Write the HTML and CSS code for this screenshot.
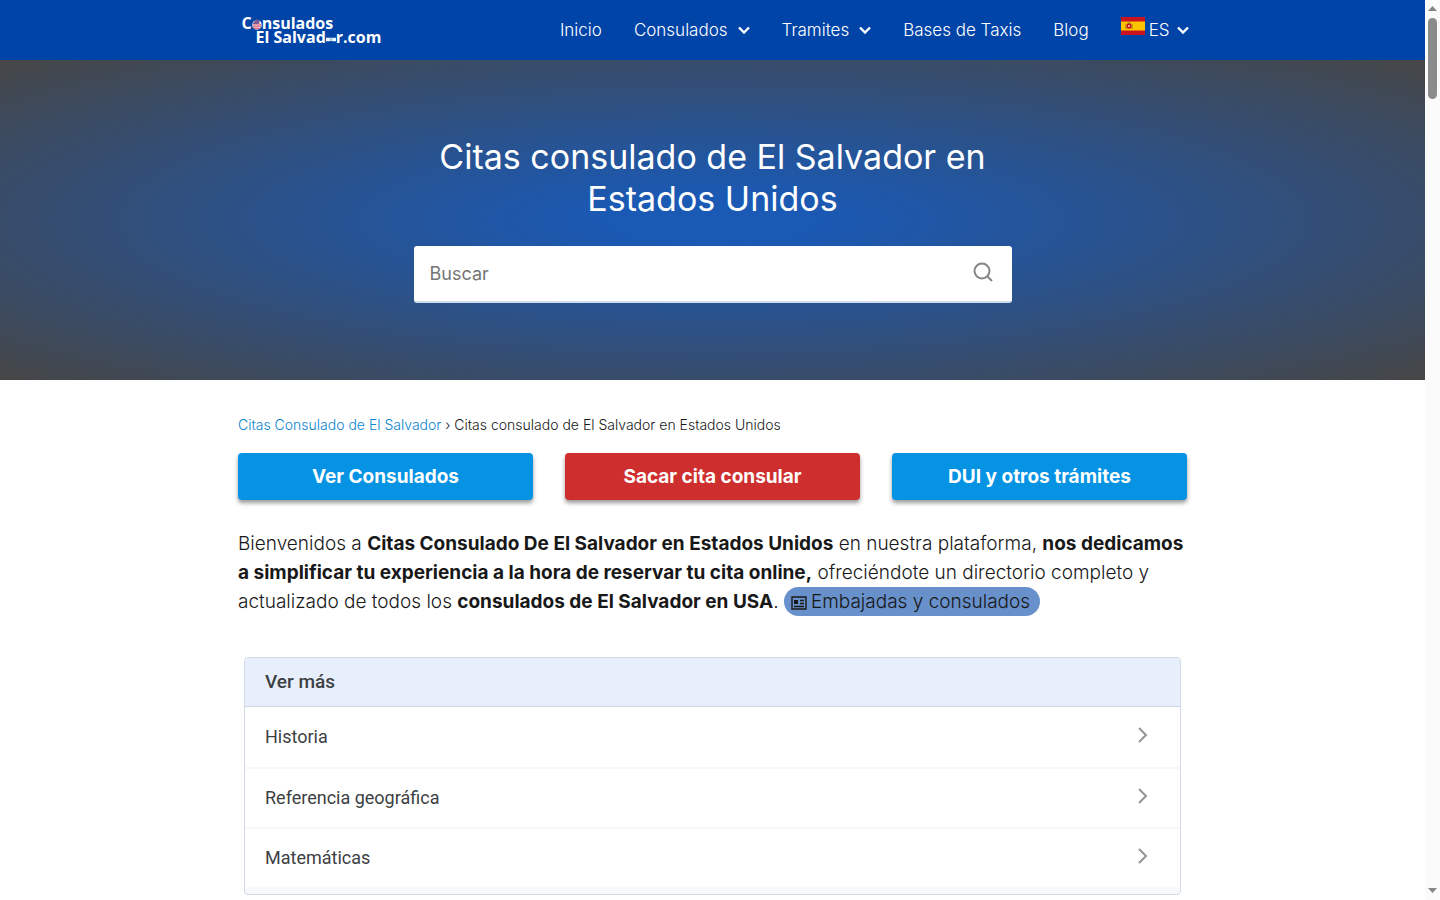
FILE: index.html
```html
<!DOCTYPE html>
<html lang="es">
<head>
<meta charset="utf-8">
<meta name="viewport" content="width=device-width, initial-scale=1">
<title>Citas consulado de El Salvador en Estados Unidos</title>
<link rel="stylesheet" href="styles.css">
</head>
<body>

<div class="page">
  <header class="site-header">
    <div class="header-inner">
      <a class="logo" href="#">
        <span class="logo-line">C<svg class="logo-globe" viewBox="0 0 11 12"><circle cx="5.5" cy="6.5" r="5.300" fill="#f6e6ea"/><path d="M1 6.500h9.500M1 8.500h9M2.500 10.500h6" stroke="#d5405a"/><path d="M1.500 4 5 0 8 2v3.500H1z" fill="#7b5a96"/></svg>nsulados</span>
        <span class="logo-line logo-second">El Salvad<svg class="logo-flag" viewBox="0 0 11 5"><path d="M0 .5h11v4H7L5.500 3.500 4 4.500H0z" fill="#eef8ff"/><path d="M4 2h3" stroke="#5aa0c8"/></svg>r.com</span>
      </a>
      <nav class="menu">
        <a href="#">Inicio</a>
        <a href="#">Consulados<svg class="arrow" viewBox="0 0 12 8"><path d="M1 1.500l5 5 5-5"/></svg></a>
        <a href="#">Tramites<svg class="arrow" viewBox="0 0 12 8"><path d="M1 1.500l5 5 5-5"/></svg></a>
        <a href="#">Bases de Taxis</a>
        <a href="#">Blog</a>
        <a class="lang" href="#"><svg class="flag" viewBox="0 0 24 18"><path fill="#c8141e" d="M0 0h24v18H0z"/><path fill="#ffc400" d="M0 4.500h24v9H0z"/><path fill="#c8141e" d="M5.500 7h5v3.500q-2.500 2.500-5 0z"/><path fill="#e8a090" d="M7 8h2v2H7z"/><path fill="#a06a20" d="M4.500 7.500h1V12h-1zM10.500 7.500h1V12h-1zM6.500 5.500h3V7h-3z"/></svg>ES<svg class="arrow" viewBox="0 0 12 8"><path d="M1 1.500l5 5 5-5"/></svg></a>
      </nav>
    </div>
  </header>

  <section class="hero">
    <h1>Citas consulado de El Salvador en Estados Unidos</h1>
    <form class="search">
      <input type="text" placeholder="Buscar" aria-label="Buscar">
      <button type="button" aria-label="Buscar"><svg viewBox="0 0 20 20"><circle cx="9" cy="9" r="7.500"/><path d="M14.500 14.500 19 19"/></svg></button>
    </form>
  </section>

  <main class="content">
    <div class="breadcrumb"><a href="#">Citas Consulado de El Salvador</a> › <span>Citas consulado de El Salvador en Estados Unidos</span></div>

    <div class="buttons">
      <a class="btn" href="#">Ver Consulados</a>
      <a class="btn btn-red" href="#">Sacar cita consular</a>
      <a class="btn" href="#">DUI y otros trámites</a>
    </div>

    <p class="intro">Bienvenidos a <strong>Citas Consulado De El Salvador en Estados Unidos</strong> en nuestra plataforma, <strong>nos dedicamos<br>a simplificar tu experiencia a la hora de reservar tu cita online,</strong> ofreciéndote un directorio completo y<br>actualizado de todos los <strong>consulados de El Salvador en USA</strong>. <a class="pill" href="#"><svg viewBox="0 0 16 14"><path d="M1 1h14v12H1z"/><path class="solid" d="M3 4h4v4H3z"/><path d="M9 4.500h4M9 7.500h4M3 10.500h10"/></svg>Embajadas y consulados</a></p>

    <section class="more">
      <h2>Ver más</h2>
      <ul>
        <li><a href="#">Historia<svg viewBox="0 0 10 16"><path d="M1 1l7 7-7 7"/></svg></a></li>
        <li><a href="#">Referencia geográfica<svg viewBox="0 0 10 16"><path d="M1 1l7 7-7 7"/></svg></a></li>
        <li><a href="#">Matemáticas<svg viewBox="0 0 10 16"><path d="M1 1l7 7-7 7"/></svg></a></li>
      </ul>
    </section>
  </main>
</div>

<div class="scrollbar">
  <svg viewBox="0 0 9 5"><path d="M0 5 4.500 0 9 5z"/></svg>
  <div class="thumb"></div>
  <svg class="down" viewBox="0 0 9 5"><path d="M0 0h9L4.500 5z"/></svg>
</div>

</body>
</html>
```
FILE: styles.css
```css
* {
  box-sizing: border-box;
}

body {
  margin: 0;
  display: flex;
  align-items: flex-start;
  font-family: Inter, "Open Sans", sans-serif;
  font-weight: 300;
  color: #181818;
  background: #fff;
}

a {
  color: inherit;
  text-decoration: none;
}

strong {
  font-weight: 700;
}

.page {
  flex: 1;
  min-width: 0;
}

/* header */
.site-header {
  background: #0044a8;
  color: #fff;
}

.header-inner {
  display: flex;
  align-items: center;
  justify-content: space-between;
  max-width: 952px;
  height: 60px;
  margin: 0 auto;
  padding-left: 5px;
}

.logo {
  display: flex;
  flex-direction: column;
  font-family: "Open Sans", sans-serif;
  font-size: 16px;
  font-weight: 700;
  line-height: 14px;
}

.logo-second {
  padding-left: 14px;
}

.logo-globe {
  width: 10px;
  height: 11px;
  vertical-align: -1px;
}

.logo-flag {
  width: 10px;
  height: 5px;
  vertical-align: 1px;
}

.menu {
  display: flex;
  gap: 32px;
  font-size: 17px;
  line-height: 24px;
}

.menu a {
  display: flex;
  align-items: center;
}

.arrow {
  width: 12px;
  height: 8px;
  margin-left: 10px;
  fill: none;
  stroke: #fff;
  stroke-width: 2.4;
}

.flag {
  width: 24px;
  height: 18px;
  margin: 0 4px 8px 0;
}

.lang .arrow {
  margin-left: 7px;
}

/* hero */
.hero {
  padding: 76px 16px 77px;
  background: radial-gradient(ellipse at center, #1a59b4 10%, #464646 100%);
}

.hero h1 {
  max-width: 598px;
  margin: 0 auto 26px;
  color: #fff;
  font-size: 34px;
  font-weight: 400;
  line-height: 42px;
  text-align: center;
}

.search {
  display: flex;
  align-items: center;
  max-width: 598px;
  height: 57px;
  margin: 0 auto;
  background: #fff;
  border-bottom: 2px solid #cfdcec;
  border-radius: 3px;
}

.search input {
  flex: 1;
  min-width: 0;
  height: 100%;
  padding: 0 16px;
  border: 0;
  background: none;
  font-family: inherit;
  font-size: 18px;
  outline: none;
}

.search input::placeholder {
  color: #757575;
}

.search button {
  padding: 0;
  margin: 0 19px 4px 0;
  border: 0;
  background: none;
}

.search svg {
  display: block;
  width: 20px;
  height: 20px;
  fill: none;
  stroke: #868686;
  stroke-width: 2;
}

/* content */
.content {
  max-width: 949px;
  margin: 0 auto;
  padding-top: 35px;
}

.breadcrumb {
  font-size: 14px;
  line-height: 20px;
}

.breadcrumb a {
  color: #0a84d0;
}

.buttons {
  display: grid;
  grid-template-columns: repeat(3, 1fr);
  gap: 32px;
  margin-top: 18px;
}

.btn {
  border-radius: 4px;
  background: #0693e3;
  box-shadow: 0 3px 4px rgba(0, 0, 0, .4);
  color: #fff;
  font-size: 19px;
  font-weight: 700;
  line-height: 47px;
  text-align: center;
}

.btn-red {
  background: #cf2e2e;
}

.intro {
  margin: 29px 0 41px;
  font-size: 19px;
  line-height: 29px;
}

.pill {
  display: inline-block;
  padding: 0 10px 0 7px;
  border-radius: 15px;
  background: #6890cb;
}

.pill svg {
  width: 16px;
  height: 14px;
  margin-right: 4px;
  vertical-align: -2px;
  fill: none;
  stroke: #181818;
  stroke-width: 1.4;
}

.pill .solid {
  fill: #181818;
  stroke: none;
}

/* list */
.more {
  margin: 0 6px;
  padding-bottom: 7px;
  border: 1px solid #d2d9e4;
  border-radius: 4px;
  background: #f8f9fb;
  color: #3c4043;
  font-family: Roboto, sans-serif;
  font-size: 18px;
  overflow: hidden;
}

.more h2 {
  margin: 0;
  padding: 0 20px;
  background: #e8effc;
  border-bottom: 1px solid #cdd6e2;
  font-size: 19px;
  font-weight: 500;
  line-height: 48px;
}

.more ul {
  margin: 0;
  padding: 0;
  list-style: none;
}

.more li {
  background: #fff;
}

.more li + li {
  border-top: 2px solid #f6f7f8;
}

.more a {
  display: flex;
  align-items: center;
  justify-content: space-between;
  padding: 0 32px 0 20px;
  font-weight: 400;
  line-height: 58px;
}

.more li:first-child a {
  line-height: 60px;
}

.more svg {
  width: 10px;
  height: 16px;
  margin-bottom: 4px;
  fill: none;
  stroke: #929598;
  stroke-width: 2;
}

/* scrollbar */
.scrollbar {
  position: sticky;
  top: 0;
  display: flex;
  flex-direction: column;
  align-items: center;
  width: 15px;
  height: 100vh;
  padding: 6px 0 7px;
  background: #fbfbfb;
}

.scrollbar svg {
  width: 9px;
  height: 5px;
  fill: #858585;
}

.scrollbar .down {
  margin-top: auto;
}

.thumb {
  width: 9px;
  height: 81px;
  margin-top: 7px;
  border-radius: 5px;
  background: #8b8b8b;
}
```
